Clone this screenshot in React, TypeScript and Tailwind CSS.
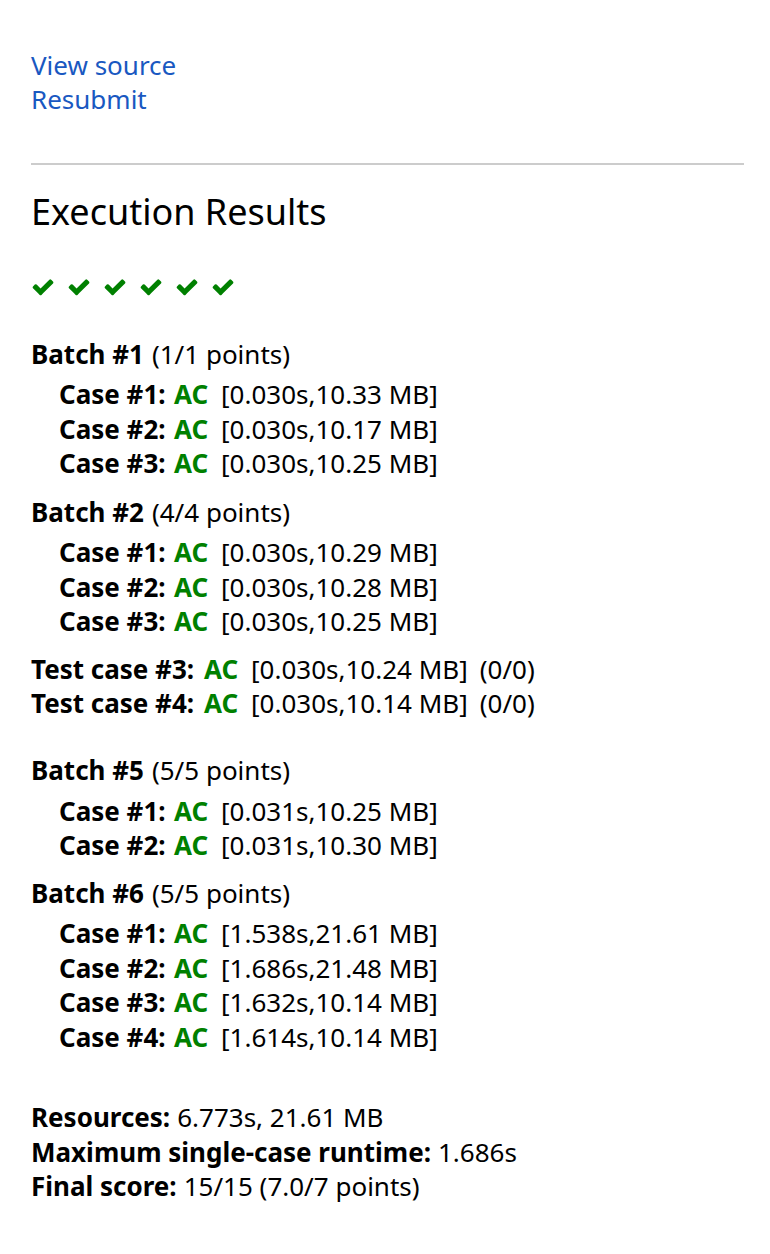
import React from "react";

const Check = () => (
  <svg width="24" height="19" viewBox="0 0 1792 1408" className="block">
    <path
      fill="#008000"
      d="M1671 254q0 40-28 68l-724 724-136 136q-28 28-68 28t-68-28l-136-136-362-362q-28-28-28-68t28-68l136-136q28-28 68-28t68 28l294 295 656-657q28-28 68-28t68 28l136 136q28 28 28 68z"
    />
  </svg>
);

type C = { n: number; t: string };

const CaseRow = ({ n, t }: C) => (
  <div className="flex pl-[28px] h-[34.5px] items-center">
    <span className="w-[115px] font-bold">Case #{n}:</span>
    <span className="w-[47px] font-bold text-[#008000]">AC</span>
    <span>[{t}]</span>
  </div>
);

const Batch = ({ n, pts, cases, mt }: { n: number; pts: string; cases: string[]; mt: string }) => (
  <div className={mt}>
    <div className="h-[34.5px] flex items-center mb-[6px]">
      <span className="font-bold">Batch #{n}</span>
      <span className="ml-[8px]">({pts} points)</span>
    </div>
    {cases.map((t, i) => (
      <CaseRow key={i} n={i + 1} t={t} />
    ))}
  </div>
);

const TestRow = ({ n, t }: C) => (
  <div className="flex h-[34.5px] items-center">
    <span className="w-[173px] font-bold">Test case #{n}:</span>
    <span className="w-[47px] font-bold text-[#008000]">AC</span>
    <span>[{t}]</span>
    <span className="ml-[12px]">(0/0)</span>
  </div>
);

export default function App() {
  return (
    <div
      className="bg-white text-black min-h-[1254px] pl-[31px] pr-[26px] pt-[49px] text-[26px]"
      style={{ fontFamily: '"Noto Sans", "Open Sans", sans-serif' }}
    >
      <div className="leading-[33.5px] text-[#1958c1]">
        <div>View source</div>
        <div>Resubmit</div>
      </div>
      <div className="mt-[47px] h-[2px] bg-[#cccccc]" />
      <h2 className="mt-[23px] text-[36px] leading-[48px] font-normal">Execution Results</h2>
      <div className="mt-[43px] flex gap-[12px]">
        {Array.from({ length: 6 }).map((_, i) => (
          <Check key={i} />
        ))}
      </div>
      <Batch
        mt="mt-[39px]"
        n={1}
        pts="1/1"
        cases={["0.030s,10.33 MB", "0.030s,10.17 MB", "0.030s,10.25 MB"]}
      />
      <Batch
        mt="mt-[14px]"
        n={2}
        pts="4/4"
        cases={["0.030s,10.29 MB", "0.030s,10.28 MB", "0.030s,10.25 MB"]}
      />
      <div className="mt-[13px]">
        <TestRow n={3} t="0.030s,10.24 MB" />
        <TestRow n={4} t="0.030s,10.14 MB" />
      </div>
      <Batch
        mt="mt-[32.5px]"
        n={5}
        pts="5/5"
        cases={["0.031s,10.25 MB", "0.031s,10.30 MB"]}
      />
      <Batch
        mt="mt-[13px]"
        n={6}
        pts="5/5"
        cases={["1.538s,21.61 MB", "1.686s,21.48 MB", "1.632s,10.14 MB", "1.614s,10.14 MB"]}
      />
      <div className="mt-[46px]">
        <div className="h-[34.5px] flex items-center">
          <span className="font-bold">Resources:</span>
          <span className="ml-[7px]">6.773s, 21.61 MB</span>
        </div>
        <div className="h-[34.5px] flex items-center">
          <span className="font-bold">Maximum single-case runtime:</span>
          <span className="ml-[7px]">1.686s</span>
        </div>
        <div className="h-[34.5px] flex items-center">
          <span className="font-bold">Final score:</span>
          <span className="ml-[7px]">15/15 (7.0/7 points)</span>
        </div>
      </div>
    </div>
  );
}
